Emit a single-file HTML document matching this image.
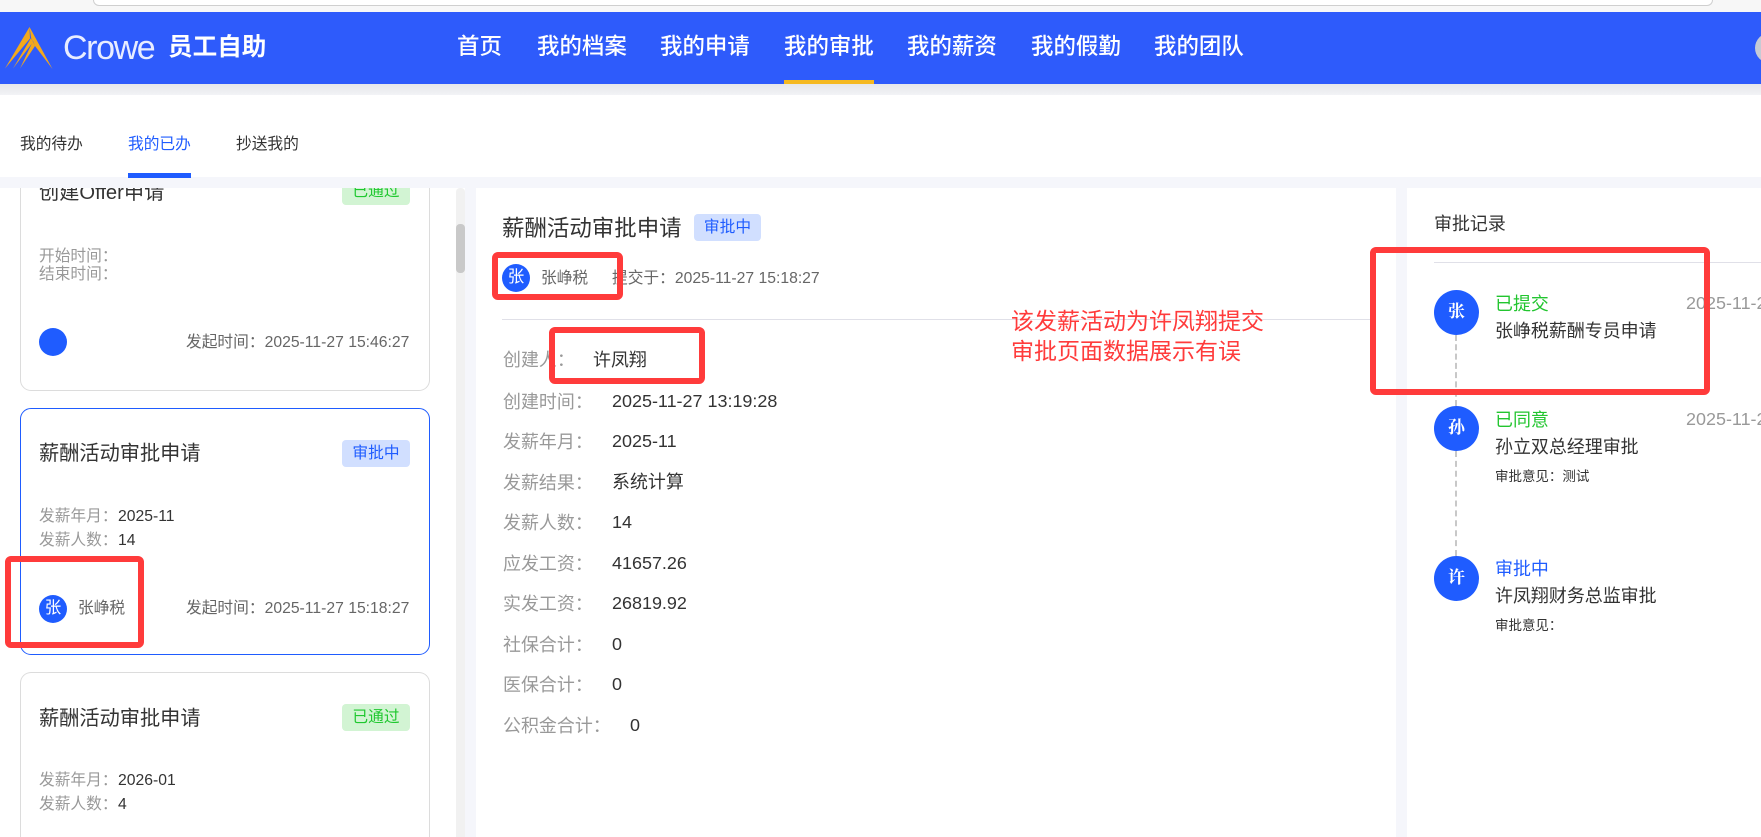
<!DOCTYPE html>
<html lang="zh"><head><meta charset="utf-8"><title>员工自助</title>
<style>
html,body{margin:0;padding:0;background:#fff;overflow:hidden}
body{width:1761px;height:837px;position:relative;overflow:hidden;font-family:"Liberation Sans","Noto Sans CJK SC",sans-serif;color:#333}
div,span.a{position:absolute}
.t{position:absolute;line-height:0;white-space:nowrap;font-size:15.72px;margin-top:1px}
.n{margin-top:0}
.g{color:#999}.d{color:#666}.k{color:#333}
.card{position:absolute;left:20px;width:408px;height:245px;border:1px solid #dcdcdc;border-radius:11px;background:#fff;box-sizing:content-box;overflow:hidden}
.tag{position:absolute;border-radius:4px;text-align:center;font-size:15.72px;line-height:27px;height:27px;white-space:nowrap}
.av{position:absolute;border-radius:50%;background:#1f5cff;color:#fff;text-align:center}
.f{font-size:17.97px}
.red{position:absolute;border:6px solid #ff3b3b;border-radius:6px;box-sizing:border-box}
.nav{position:absolute;top:47px;line-height:0;font-size:22.46px;font-weight:500;color:#fff;white-space:nowrap}
.num{font-family:"Liberation Serif","Noto Serif CJK SC",serif;font-weight:700}
</style></head><body>
<!-- browser chrome -->
<div style="left:0;top:0;width:1761px;height:12px;background:#f7f7f7"></div>
<div style="left:93px;top:0;width:1620px;height:6px;background:#fff;border:1px solid #cfcfcf;border-top:0;border-radius:0 0 16px 16px;box-sizing:border-box"></div>
<!-- header -->
<div style="left:0;top:12px;width:1761px;height:72px;background:#2e5bfb"></div>
<div style="left:0;top:84px;width:1761px;height:11px;background:linear-gradient(#e6e7ea,#f2f3f6)"></div>
<svg style="position:absolute;left:0;top:12px" width="60" height="72" viewBox="0 12 60 72"><path fill="#f2a81d" d="M29.5 27L5 68.500L30 38.500ZM31 38L13 68.500L33 42ZM33 41L20 68.500L35 46ZM29.500 27L52.500 69L35 46L31 37.500Z"/></svg>
<span class="t" style="left:63px;top:47px;font-size:34px;letter-spacing:-1.4px;color:#e8edff">Crowe</span>
<span class="t" style="left:168px;top:47px;font-size:24.6px;font-weight:700;color:#fff">员工自助</span>
<span class="nav" style="left:457px">首页</span>
<span class="nav" style="left:537px">我的档案</span>
<span class="nav" style="left:660px">我的申请</span>
<span class="nav" style="left:784px">我的审批</span>
<span class="nav" style="left:907px">我的薪资</span>
<span class="nav" style="left:1031px">我的假勤</span>
<span class="nav" style="left:1154px">我的团队</span>
<div style="left:784px;top:80px;width:90px;height:4px;background:#f5b921"></div>
<svg style="position:absolute;left:1755px;top:33px" width="6" height="30" viewBox="0 0 6 30"><circle cx="15" cy="15" r="15" fill="#c6cbd5"/></svg>
<!-- tabs -->
<span class="t" style="left:20px;top:144px">我的待办</span>
<span class="t" style="left:128px;top:144px;color:#1f5cff">我的已办</span>
<span class="t" style="left:236px;top:144px">抄送我的</span>
<div style="left:0;top:177px;width:1761px;height:11px;background:#f5f6fb"></div>
<div style="left:128px;top:173px;width:63px;height:5px;background:#1f5cff"></div>
<!-- gutters -->
<div style="left:465px;top:188px;width:11px;height:649px;background:#f5f6fb"></div>
<div style="left:1396px;top:188px;width:11px;height:649px;background:#f5f6fb"></div>
<div style="left:456px;top:188px;width:9px;height:649px;background:#f1f1f1;border-radius:4px 4px 0 0"></div>
<div style="left:456px;top:224px;width:9px;height:49px;background:#c9c9c9;border-radius:4px"></div>
<!-- left list -->
<div style="left:0;top:188px;width:456px;height:649px;overflow:hidden">
  <div class="card" style="top:0;height:202px;border-top:0;border-radius:0 0 11px 11px">
    <span class="t" style="left:18px;top:4px;font-size:20.2px">创建Offer申请</span>
    <div class="tag" style="left:321px;top:-10px;width:68px;background:#d2f4d3;color:#1fc82f">已通过</div>
    <span class="t g" style="left:18px;top:68px">开始时间：</span>
    <span class="t g" style="left:18px;top:86px">结束时间：</span>
    <div class="av" style="left:18px;top:140px;width:28px;height:28px"></div>
    <span class="t d" style="left:165px;top:154px">发起时间：2025-11-27 15:46:27</span>
  </div>
  <div class="card" style="top:220px;height:245px;border-color:#1f5cff">
    <span class="t" style="left:18px;top:44px;font-size:20.2px">薪酬活动审批申请</span>
    <div class="tag" style="left:321px;top:31px;width:68px;background:#d1dfff;color:#1f5cff">审批中</div>
    <span class="t g" style="left:18px;top:107px">发薪年月：</span><span class="t k" style="left:97px;top:107px">2025-11</span>
    <span class="t g" style="left:18px;top:131px">发薪人数：</span><span class="t k" style="left:97px;top:131px">14</span>
    <div class="av" style="left:18px;top:186px;width:28px;height:28px;line-height:27px;font-size:16.5px">张</div>
    <span class="t d" style="left:57px;top:199px">张峥税</span>
    <span class="t d" style="left:165px;top:199px">发起时间：2025-11-27 15:18:27</span>
  </div>
  <div class="card" style="top:484px;height:164px;border-bottom:0;border-radius:11px 11px 0 0">
    <span class="t" style="left:18px;top:45px;font-size:20.2px">薪酬活动审批申请</span>
    <div class="tag" style="left:321px;top:31px;width:68px;background:#d2f4d3;color:#1fc82f">已通过</div>
    <span class="t g" style="left:18px;top:107px">发薪年月：</span><span class="t k" style="left:97px;top:107px">2026-01</span>
    <span class="t g" style="left:18px;top:131px">发薪人数：</span><span class="t k" style="left:97px;top:131px">4</span>
  </div>
</div>
<!-- middle -->
<span class="t" style="left:502px;top:228px;font-size:22.46px">薪酬活动审批申请</span>
<div class="tag" style="left:694px;top:214px;width:67px;background:#d1dfff;color:#1f5cff">审批中</div>
<div class="av" style="left:502px;top:264px;width:28px;height:28px;line-height:27px;font-size:16.5px">张</div>
<span class="t d" style="left:541px;top:278px">张峥税</span>
<span class="t d" style="left:612px;top:278px">提交于：2025-11-27 15:18:27</span>
<div style="left:502px;top:319px;width:868px;height:1px;background:#e0e0e8"></div>
<span class="t f g" style="left:503px;top:359px">创建人：</span><span class="t f k" style="left:593px;top:359px">许凤翔</span>
<span class="t f g" style="left:503px;top:401px">创建时间：</span><span class="t f k n" style="left:612px;top:401px">2025-11-27 13:19:28</span>
<span class="t f g" style="left:503px;top:441px">发薪年月：</span><span class="t f k n" style="left:612px;top:441px">2025-11</span>
<span class="t f g" style="left:503px;top:482px">发薪结果：</span><span class="t f k n" style="left:612px;top:482px">系统计算</span>
<span class="t f g" style="left:503px;top:522px">发薪人数：</span><span class="t f k n" style="left:612px;top:522px">14</span>
<span class="t f g" style="left:503px;top:563px">应发工资：</span><span class="t f k n" style="left:612px;top:563px">41657.26</span>
<span class="t f g" style="left:503px;top:603px">实发工资：</span><span class="t f k n" style="left:612px;top:603px">26819.92</span>
<span class="t f g" style="left:503px;top:644px">社保合计：</span><span class="t f k n" style="left:612px;top:644px">0</span>
<span class="t f g" style="left:503px;top:684px">医保合计：</span><span class="t f k n" style="left:612px;top:684px">0</span>
<span class="t f g" style="left:503px;top:725px">公积金合计：</span><span class="t f k n" style="left:630px;top:725px">0</span>
<!-- right -->
<span class="t f" style="left:1434px;top:223px">审批记录</span>
<div style="left:1434px;top:262px;width:327px;height:1px;background:#e0e0e8"></div>
<div style="left:1455px;top:335px;width:0;height:71px;border-left:2px dashed #c8c8c8"></div>
<div style="left:1455px;top:451px;width:0;height:105px;border-left:2px dashed #c8c8c8"></div>
<div class="av num" style="left:1434px;top:290px;width:45px;height:45px;line-height:44px;font-size:17px">张</div>
<div class="av num" style="left:1434px;top:406px;width:45px;height:45px;line-height:44px;font-size:17px">孙</div>
<div class="av num" style="left:1434px;top:556px;width:45px;height:45px;line-height:44px;font-size:17px">许</div>
<span class="t f" style="left:1495px;top:303px;color:#22c52f">已提交</span>
<div style="left:1686px;top:290px;width:75px;height:26px;overflow:hidden"><span class="t f g n" style="left:0;top:13px">2025-11-27 15:18:27</span></div>
<span class="t f" style="left:1495px;top:330px">张峥税薪酬专员申请</span>
<span class="t f" style="left:1495px;top:419px;color:#22c52f">已同意</span>
<div style="left:1686px;top:406px;width:75px;height:26px;overflow:hidden"><span class="t f g n" style="left:0;top:13px">2025-11-27 15:30:00</span></div>
<span class="t f" style="left:1495px;top:446px">孙立双总经理审批</span>
<span class="t" style="left:1495px;top:476px;font-size:13.47px">审批意见：测试</span>
<span class="t f" style="left:1495px;top:568px;color:#1f5cff">审批中</span>
<span class="t f" style="left:1495px;top:595px">许凤翔财务总监审批</span>
<span class="t" style="left:1495px;top:625px;font-size:13.47px">审批意见：</span>
<!-- annotations -->
<span class="t" style="left:1011px;top:320px;font-size:23px;color:#ff3b3b">该发薪活动为许凤翔提交</span>
<span class="t" style="left:1011px;top:350px;font-size:23px;color:#ff3b3b">审批页面数据展示有误</span>
<div class="red" style="left:5px;top:556px;width:139px;height:92px"></div>
<div class="red" style="left:492px;top:252px;width:131px;height:48px"></div>
<div class="red" style="left:549px;top:327px;width:156px;height:57px"></div>
<div class="red" style="left:1370px;top:247px;width:340px;height:148px"></div>
</body></html>
